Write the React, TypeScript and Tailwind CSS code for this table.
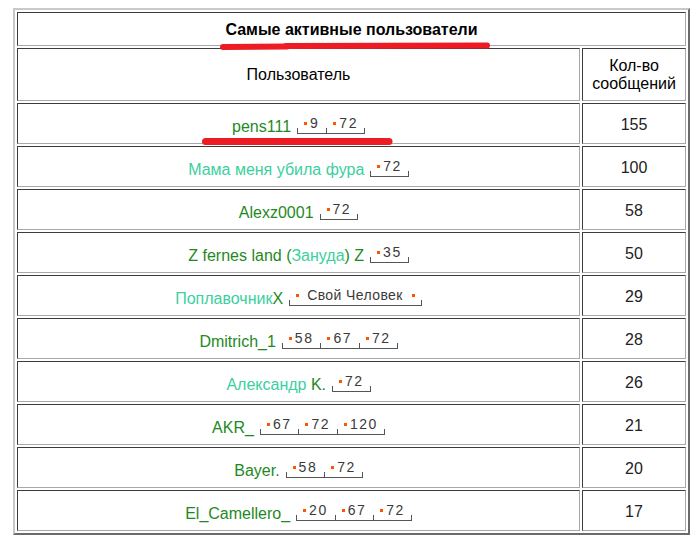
const GREEN = "text-[#1e8a1e]";
const TEAL = "text-[#3ccfa0]";

type Part = [string, "g" | "t"];

interface Row {
  name: Part[];
  badges: string[];
  special?: string;
  count: number;
}

const rows: Row[] = [
  { name: [["pens111", "g"]], badges: ["9", "72"], count: 155 },
  { name: [["Мама меня убила фура", "t"]], badges: ["72"], count: 100 },
  { name: [["Alexz0001", "g"]], badges: ["72"], count: 58 },
  {
    name: [
      ["Z fernes land (", "g"],
      ["Зануда", "t"],
      [") Z", "g"],
    ],
    badges: ["35"],
    count: 50,
  },
  {
    name: [
      ["Поплавочник", "t"],
      ["X", "g"],
    ],
    badges: [],
    special: "Свой Человек",
    count: 29,
  },
  { name: [["Dmitrich_1", "g"]], badges: ["58", "67", "72"], count: 28 },
  {
    name: [
      ["Александр", "t"],
      [" K.", "g"],
    ],
    badges: ["72"],
    count: 26,
  },
  { name: [["AKR_", "g"]], badges: ["67", "72", "120"], count: 21 },
  { name: [["Bayer.", "g"]], badges: ["58", "72"], count: 20 },
  { name: [["El_Camellero_", "g"]], badges: ["20", "67", "72"], count: 17 },
];

const cell =
  "border border-t-[#3c3c3c] border-l-[#3c3c3c] border-r-[#a8a8a8] border-b-[#a8a8a8] p-[1px] text-center align-middle";

function Dot() {
  return <span className="inline-block w-[3px] h-[3px] mt-[2px] bg-[#ff5500] shrink-0" />;
}

function Segment({ children, last }: { children: React.ReactNode; last: boolean }) {
  return (
    <span className="relative inline-flex items-center pl-[7px] pr-[7px] pb-[3px] border-b border-[#555]">
      <span className="absolute left-0 bottom-0 w-px h-[5px] bg-[#555]" />
      {children}
      {last && <span className="absolute right-0 bottom-0 w-px h-[5px] bg-[#555]" />}
    </span>
  );
}

function Badges({ row }: { row: Row }) {
  if (row.special) {
    return (
      <span className="inline-flex ml-[6px] mb-[1px] text-[14px] leading-[14px] text-[#3a3a3a] tracking-[0.4px]">
        <Segment last>
          <Dot />
          <span className="ml-[8px] mr-[9px]">{row.special}</span>
          <Dot />
        </Segment>
      </span>
    );
  }
  return (
    <span className="inline-flex ml-[6px] mb-[1px] text-[14px] leading-[14px] text-[#3a3a3a] tracking-[1.5px]">
      {row.badges.map((b, i) => (
        <Segment key={i} last={i === row.badges.length - 1}>
          <Dot />
          <span className="ml-[3px]">{b}</span>
        </Segment>
      ))}
    </span>
  );
}

export default function App() {
  return (
    <div
      className="relative w-[700px] h-[542px] bg-white pt-[8px] pl-[13px] text-black"
      style={{ fontFamily: '"Liberation Sans", Arial, sans-serif' }}
    >
      <table className="w-[677px] border-separate border-spacing-[2px] border-2 border-t-[#c8c8c8] border-l-[#c8c8c8] border-r-[#6b6b6b] border-b-[#6b6b6b]">
        <tbody>
          {/* заголовок */}
          <tr>
            <th colSpan={2} className={cell + " h-[34px] text-[16px] font-bold pt-[3px]"}>
              Самые активные пользователи
            </th>
          </tr>
          <tr>
            <th className={cell + " h-[53px] text-[16px] font-normal leading-[18px] pt-[2px]"}>
              Пользователь
            </th>
            <th className={cell + " w-[104px] text-[16px] font-normal leading-[18px]"}>
              Кол-во сообщений
            </th>
          </tr>

          {rows.map((r, i) => (
            <tr key={i}>
              <td className={cell + " h-[41px] text-[16px] pt-[7px]"}>
                <span className="inline-flex items-end">
                  <span className="leading-[17px] whitespace-pre">
                    {r.name.map(([t, c], j) => (
                      <span key={j} className={c === "g" ? GREEN : TEAL}>
                        {t}
                      </span>
                    ))}
                  </span>
                  <Badges row={r} />
                </span>
              </td>
              <td className={cell + " h-[41px] text-[16px] text-[#222] pt-[3px]"}>{r.count}</td>
            </tr>
          ))}
        </tbody>
      </table>

      {/* красные пометки поверх скриншота */}
      <svg
        className="absolute left-0 top-0 pointer-events-none"
        width="700"
        height="542"
        viewBox="0 0 700 542"
      >
        <line x1="223" y1="47" x2="287" y2="46.5" stroke="#ed1c24" strokeWidth="6" strokeLinecap="round" />
        <line x1="286" y1="46" x2="487" y2="45.5" stroke="#ed1c24" strokeWidth="6" strokeLinecap="round" />
        <line x1="205.5" y1="141.5" x2="389" y2="141.5" stroke="#ed1c24" strokeWidth="7" strokeLinecap="round" />
      </svg>
    </div>
  );
}
